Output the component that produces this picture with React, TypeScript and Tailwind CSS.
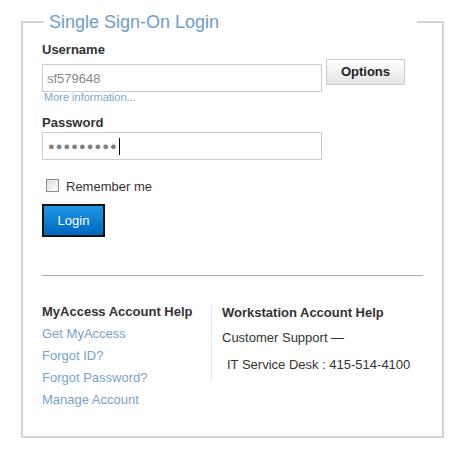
import { useState } from "react";

const App = () => {
  const [remember, setRemember] = useState(false);

  const accountLinks = ["Get MyAccess", "Forgot ID?", "Forgot Password?", "Manage Account"];

  return (
    <div className="min-h-screen bg-white pt-[11px] pl-[21px] font-['Liberation_Sans',Arial,sans-serif] text-[13px] text-[#333]">
      <fieldset className="w-[423px] border-2 border-[#d4d4d4] pt-[9px] pb-[25px] pl-[19px] pr-[19px]">
        <legend className="ml-[2px] w-[373px] pl-[5px] text-[18px] leading-[22px] text-[#6d9dca]">
          Single Sign-On Login
        </legend>

        <form onSubmit={(e) => e.preventDefault()}>
          <label htmlFor="username" className="block font-bold leading-[15px]">
            Username
          </label>
          <div className="mt-[2px] flex items-start gap-[4px]">
            <input
              id="username"
              type="text"
              defaultValue="sf579648"
              className="mt-[5px] h-[28px] w-[280px] border border-[#cccccc] px-[4px] text-[13px] text-[#888] outline-none"
            />
            <button
              type="button"
              className="h-[26px] w-[79px] border border-[#cccccc] bg-gradient-to-b from-white to-[#e4e4e4] text-[13px] font-bold text-[#222]"
            >
              Options
            </button>
          </div>
          <a href="#" className="mt-[-1px] block pl-[2px] text-[11px] leading-[13px] text-[#80a6cf]">
            More information...
          </a>

          <label htmlFor="password" className="mt-[11px] block font-bold leading-[15px]">
            Password
          </label>
          <div className="mt-[2px] flex h-[28px] w-[280px] items-center border border-[#cccccc] pl-[5px]">
            <span className="text-[11px] leading-none tracking-[1.1px] text-[#808080]">●●●●●●●●●</span>
            <span className="ml-[1px] h-[17px] w-px bg-black" />
          </div>

          <label className="mt-[19px] flex items-start leading-[15px]">
            <input
              type="checkbox"
              checked={remember}
              onChange={(e) => setRemember(e.target.checked)}
              className="ml-[4px] h-[13px] w-[13px] appearance-none border border-[#8c8c8c] bg-gradient-to-br from-[#dedede] to-white"
            />
            <span className="ml-[7px]">Remember me</span>
          </label>

          <button
            type="submit"
            className="mt-[10px] block h-[33px] w-[63px] border-2 border-[#111] bg-gradient-to-b from-[#1d97e3] to-[#0068c0] text-[13px] text-white"
          >
            Login
          </button>
        </form>

        <div className="mt-[38px] border-t border-[#a9a9a9]" />

        <div className="mt-[25px] flex items-start">
          <div className="w-[169px] leading-[22px]">
            <div className="font-bold">MyAccess Account Help</div>
            {accountLinks.map((link) => (
              <a key={link} href="#" className="block text-[#7ba2cc]">
                {link}
              </a>
            ))}
          </div>
          <div className="mt-[5px] border-l border-[#e8e8e8] pl-[10px] pb-[9px]">
            <div className="font-bold leading-[14px]">Workstation Account Help</div>
            <div className="mt-[10px] leading-[15px]">Customer Support —</div>
            <div className="mt-[12px] pl-[5px] leading-[15px]">IT Service Desk : 415-514-4100</div>
          </div>
        </div>
      </fieldset>
    </div>
  );
};

export default App;
